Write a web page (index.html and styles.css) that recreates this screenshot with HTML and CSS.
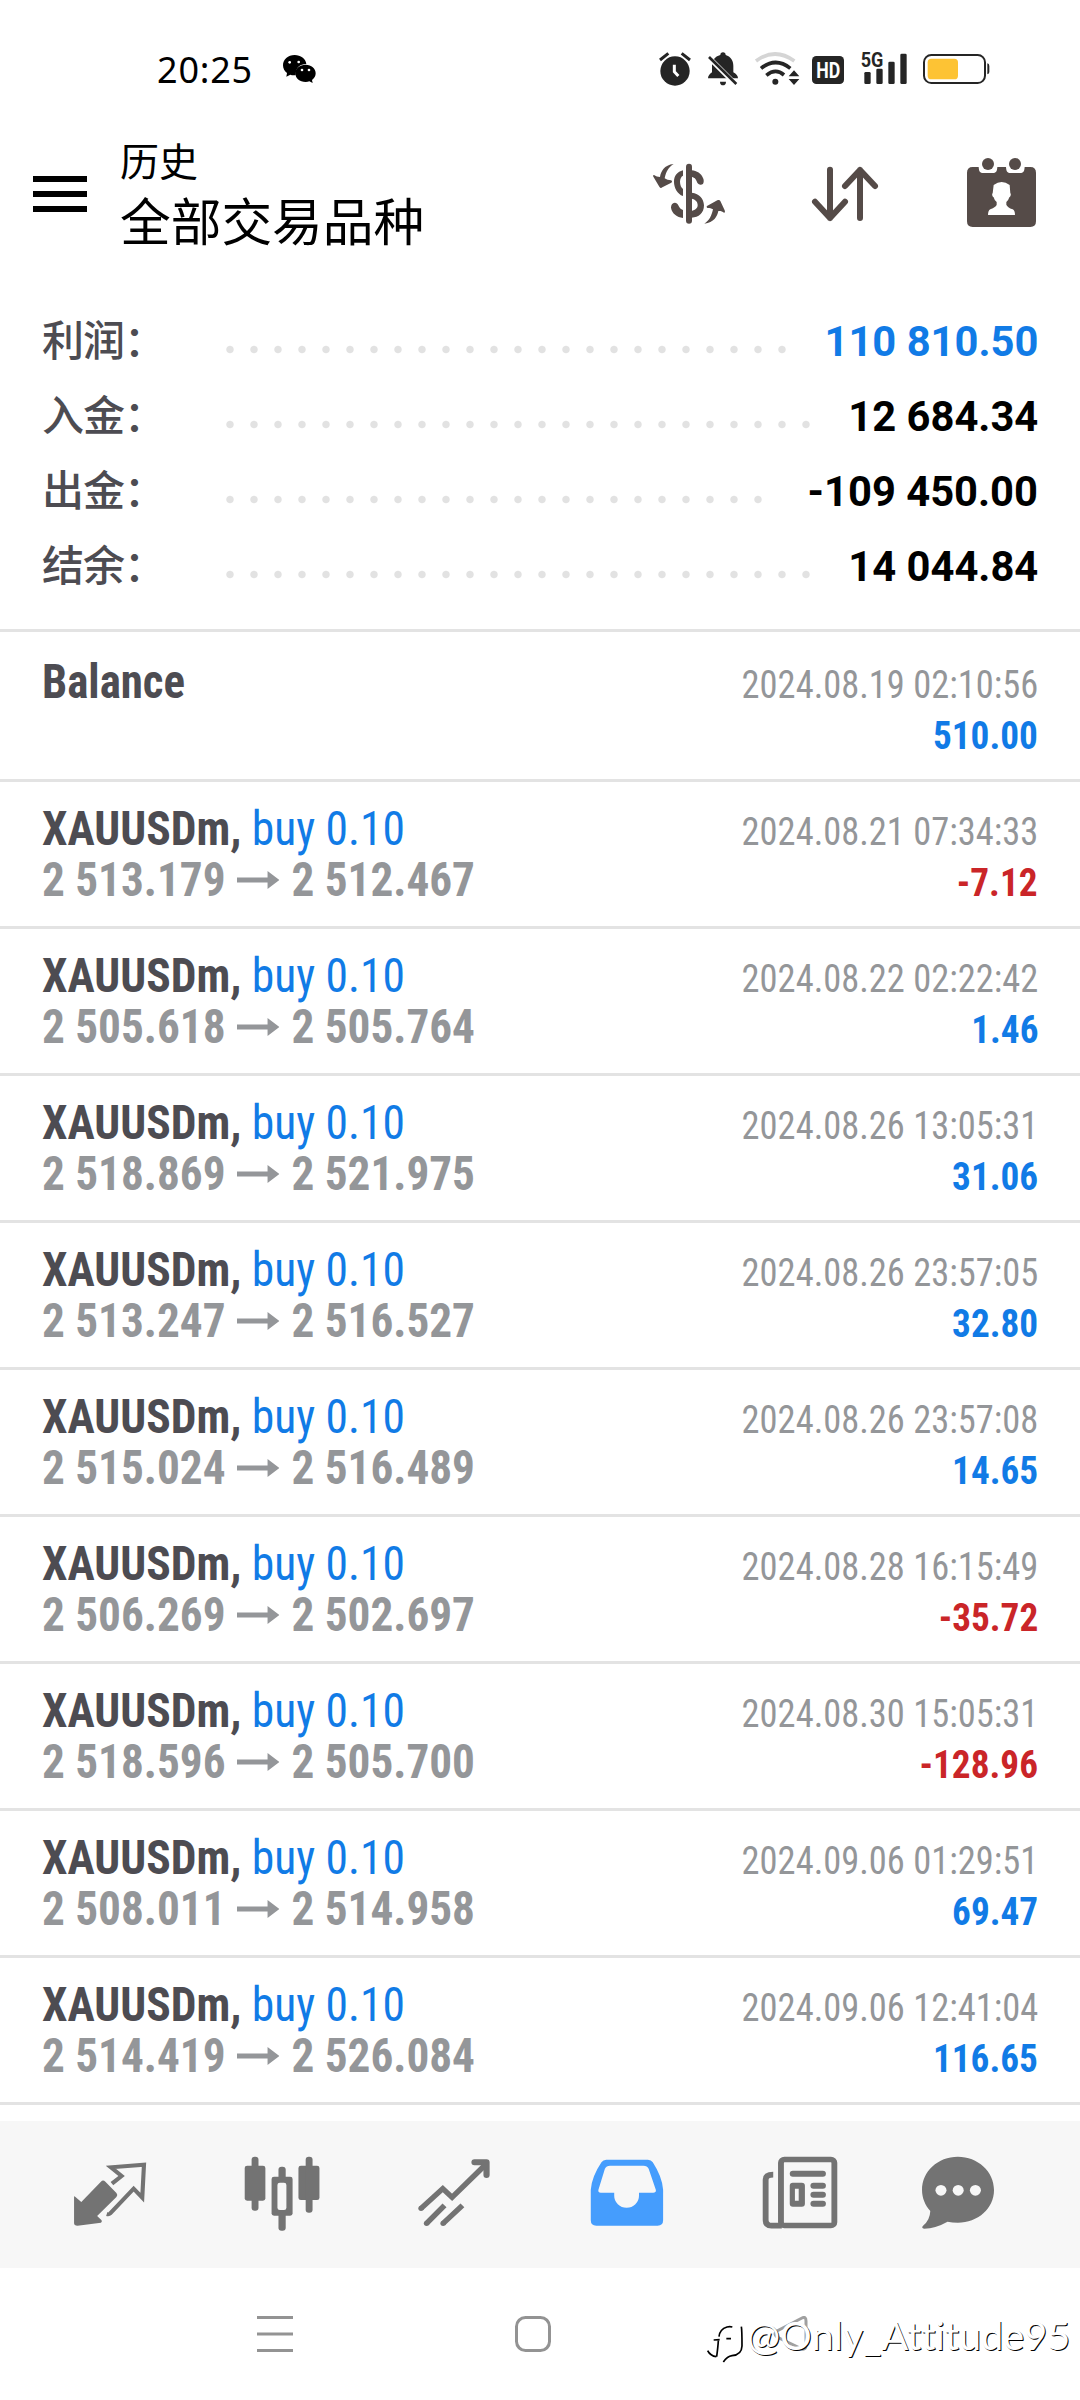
FILE: index.html
```
<!DOCTYPE html>
<html lang="zh-CN">
<head>
<meta charset="utf-8">
<title>历史</title>
<link rel="stylesheet" href="styles.css">
</head>
<body>
<div class="status">
  <span class="clock">20:25</span>
  <svg class="wechat" width="36" height="60" viewBox="426 0 108 180">
    <path d="M464 45c-20 0-35 13-35 31 0 10 5 18 12 23l-2 11 12-6c5 2 12 2 16 1 0-22 12-33 32-33-2-16-17-27-35-27z"/>
    <path d="M497 74c-18 0-31 11-31 26s13 26 31 26c4 0 8-1 11-2l10 5-2-9c7-5 11-12 11-20 0-15-13-26-30-26z"/>
    <g fill="#fff"><circle cx="449" cy="67" r="4"/><circle cx="476" cy="66" r="4"/><circle cx="486" cy="90" r="4"/><circle cx="507" cy="90" r="4"/></g>
  </svg>
  <div class="indicators">
    <svg width="34" height="60" viewBox="54 0 102 180"><circle cx="105" cy="93" r="44"/><path d="M60 60l25-20M150 60l-25-20" stroke="#252525" stroke-width="9"/><path d="M103 74v21l12 13" fill="none" stroke="#fff" stroke-width="9"/></svg>
    <svg class="g14" width="34" height="60" viewBox="198 0 102 180"><path d="M249 37c-5 0-8 3-8 8-17 4-25 17-25 32v20c-7 5-12 10-12 18h90c0-8-5-13-14-18V77c0-15-8-28-23-32 0-5-3-8-8-8zM240 125h18c0 8-4 11-9 11s-9-3-9-11z"/><path d="M202 48l88 88" stroke="#fff" stroke-width="15"/><path d="M207 51l82 81" stroke="#252525" stroke-width="8"/></svg>
    <svg class="g14" width="46" height="60" viewBox="342 0 138 180"><g fill="none" stroke="#252525" stroke-width="11"><path d="M348 63q57-42 115 0" stroke="#d5d5d5"/><path d="M363 85q44-35 88 0"/><path d="M379 106q28-23 53-1"/></g><circle cx="406" cy="125" r="9"/><path d="M446 109l16-18 16 18zM446 117l16 18 16-18z"/></svg>
    <svg class="g11" width="34" height="60" viewBox="513 0 102 180"><rect x="516" y="48" width="96" height="84" rx="13"/><text class="hd" x="565" y="113" text-anchor="middle" textLength="72" lengthAdjust="spacingAndGlyphs">HD</text></svg>
    <svg class="g15" width="48" height="60" viewBox="660 0 144 180"><text class="fiveg" x="662" y="80" textLength="68" lengthAdjust="spacingAndGlyphs">5G</text><rect x="673" y="96" width="19" height="36" rx="4"/><rect x="709" y="86" width="19" height="46" rx="4"/><rect x="745" y="65" width="19" height="67" rx="4"/><rect x="781" y="41" width="19" height="91" rx="4"/></svg>
    <svg class="g14" width="69" height="60" viewBox="846 0 207 180"><rect x="852" y="45" width="183" height="84" rx="22" fill="none" stroke="#252525" stroke-width="6"/><rect x="863" y="56" width="91" height="62" rx="11" fill="#fdc334"/><path d="M1042 70q6 1 6 8v18q0 6-6 7z"/></svg>
  </div>
</div>

<header class="header">
  <div class="burger"><i></i><i></i><i></i></div>
  <div class="titles"><div class="sub">历史</div><div class="main">全部交易品种</div></div>
  <div class="actions">
    <svg width="80" height="80" viewBox="90 75 240 240">
      <path d="M210 110v162" stroke-width="18" stroke-linecap="round"/>
      <path d="M192 121c-17 4-27 17-27 34 0 18 10 37 27 43v-21c-5-4-9-12-9-22 0-9 4-16 9-18z" class="solid"/>
      <path d="M218 121c15 2 29 8 35 25 3 9 0 18-7 18-8 1-11-4-13-10-2-8-8-12-15-14zM218 188c24 3 36 18 37 38 0 23-16 37-37 37v-20c11-3 18-8 18-18s-7-17-18-19zM192 240v24c-18-3-33-13-36-31 0-9 4-14 11-15 6 0 10 5 12 10 3 6 6 10 13 12z" class="solid"/>
      <path d="M164 102c-29 3-38 22-41 39-6 0-13-2-18-6-4 0-3 3-1 7l17 28c3 5 6 4 9 2l27-14c3-2 3-5-1-7-7 0-14-2-19-6 4-20 11-33 27-43zM256 281c29-3 39-22 42-38 6-1 12 1 17 5 4 0 3-3 2-7l-13-28c-2-4-5-4-9-2l-31 17c-2 2-1 5 2 6 6 0 11 1 16 4-4 18-10 33-26 43z" class="solid"/>
    </svg>
    <svg width="80" height="80" viewBox="558 75 240 240"><path d="M633 119v145M588 215l45 49 45-49M723 264V120M678 168l45-48 45 48" fill="none" stroke-width="18" stroke-linecap="round" stroke-linejoin="round"/></svg>
    <svg width="80" height="80" viewBox="1020 75 240 240"><path d="M1055 111h18c1 14 4 18 14 18h28c10 0 13-4 14-18h26c1 14 4 18 14 18h28c10 0 13-4 14-18h17q17 0 17 17v146q0 17-17 17h-173q-17 0-17-17V128q0-17 17-17z" class="solid"/><circle cx="1101" cy="102" r="18" class="solid"/><circle cx="1182" cy="102" r="18" class="solid"/><path d="M1118 165q24-18 48 0l2 25c3 1 1 11-3 12q-3 10-9 14v8q3 8 19 14 7 4 7 17h-81q0-13 7-17 17-7 19-14v-8q-7-5-9-14c-4-1-6-11-3-12z" fill="#fff"/></svg>
  </div>
</header>

<section class="summary">
  <div class="sum"><span class="label">利润：</span><span class="dots"></span><b class="blue">110 810.50</b></div>
  <div class="sum"><span class="label">入金：</span><span class="dots"></span><b>12 684.34</b></div>
  <div class="sum"><span class="label">出金：</span><span class="dots"></span><b>-109 450.00</b></div>
  <div class="sum"><span class="label">结余：</span><span class="dots"></span><b>14 044.84</b></div>
</section>

<main class="list" id="list"></main>

<nav class="tabs">
  <svg width="90" height="90" viewBox="188.7 205 261.3 270" preserveAspectRatio="none">
    <path d="M215 352q0-4 4 0l17 15 57-61q6-7 13 0l32 34q5 6 0 12l-56 57 13 13q2 5-2 7l-68 9q-10 0-10-8z"/>
    <path d="M325 312l28-23-31-26 96-8-5 99-25-27-68 74q-4 4-10 2" fill="none" stroke="#737373" stroke-width="12"/>
  </svg>
  <svg width="90" height="90" viewBox="686.6 205 261.3 270" preserveAspectRatio="none">
    <rect x="709" y="258" width="60" height="105" rx="7"/><rect x="729" y="231" width="20" height="162" rx="9"/>
    <rect x="865" y="258" width="61" height="103" rx="7"/><rect x="886" y="231" width="20" height="168" rx="9"/>
    <rect x="787" y="291" width="61" height="117" rx="7"/><rect x="807" y="261" width="21" height="192" rx="9"/><rect x="804" y="309" width="26" height="82" rx="7" fill="#f7f7f7"/>
  </svg>
  <svg width="90" height="90" viewBox="1185.9 205 261.3 270" preserveAspectRatio="none">
    <g fill="none" stroke="#737373" stroke-width="16"><path d="M1221 386l63-59 27 26 99-100" stroke-linejoin="miter"/><path d="M1376 248h35v38" stroke-width="18" stroke-linecap="round" stroke-linejoin="round"/><path d="M1237 431l52-54M1285 431l56-54"/></g>
    <circle cx="1221" cy="386" r="8"/><circle cx="1237" cy="431" r="8"/><circle cx="1285" cy="431" r="8"/>
  </svg>
  <svg width="90" height="90" viewBox="120.5 205 261.3 270" preserveAspectRatio="none" fill="#459dfd">
    <path fill-rule="evenodd" d="M191 240h121q9 0 14 8 27 43 30 82v92q0 16-16 16H162q-16 0-16-16v-92q3-39 31-82 5-8 14-8zM202 258q-11 0-15 9l-19 64q-1 8 7 8h39v9a36 36 0 0 0 72 0v-9h41q9 0 8-8l-21-64q-4-9-15-9z"/>
  </svg>
  <svg width="90" height="90" viewBox="624.1 205 261.3 270" preserveAspectRatio="none">
    <g fill="none" stroke="#737373" stroke-width="17"><rect x="699.500" y="239.500" width="155" height="198" rx="10"/><path d="M677 285q-22 0-22 15v121q0 17 17 17h30"/></g>
    <rect x="725" y="273" width="105" height="18" rx="9"/><path fill-rule="evenodd" d="M734 309h26q9 0 9 9v54q0 9-9 9h-26q-9 0-9-9v-54q0-9 9-9zM740 327v36h11v-36z"/><rect x="785" y="309" width="45" height="18" rx="9"/><rect x="785" y="336" width="45" height="18" rx="9"/><rect x="785" y="363" width="45" height="18" rx="9"/>
  </svg>
  <svg width="90" height="90" viewBox="1082.8 205 261.3 270" preserveAspectRatio="none">
    <path d="M1213 231c58 0 105 44 105 100s-47 98-105 98q-16 0-30-3-34 20-68 21-9-2-3-9 20-16 21-44c-15-17-24-39-24-63 0-56 46-100 104-100z"/><g fill="#f7f7f7"><circle cx="1164" cy="332" r="16"/><circle cx="1214" cy="332" r="16"/><circle cx="1264" cy="332" r="16"/></g>
  </svg>
</nav>

<div class="sysnav">
  <svg width="36" height="36" viewBox="0 0 36 36"><path d="M0 1.500h36M0 18h36M0 34.500h36" stroke="#939393" stroke-width="3"/></svg>
  <svg width="36" height="36" viewBox="0 0 36 36"><rect x="1.500" y="1.500" width="33" height="33" rx="9" fill="none" stroke="#939393" stroke-width="3"/></svg>
  <svg width="36" height="36" viewBox="0 0 36 36"><path d="M29 2L4 15q-4 3 0 6l25 12q4 1 4-4V5q0-5-4-3z" fill="none" stroke="#a0a0a0" stroke-width="3"/></svg>
  <div class="mark">
    <svg width="40" height="50" viewBox="50 0 120 150"><path d="M86 110q2-22 24-29 8-2 16 0M70 120l18-1M108 116h14M84 122q-1 18-5 48M52 152q8 16 26 18M153 80q2 10 2 58-1 27-30 29-14 2-26 19" transform="translate(0 -45)" fill="none" stroke="#000" stroke-width="5"/></svg>
    <span>@Only_Attitude95</span>
  </div>
</div>
<script src="list.js"></script>
</body>
</html>
```
FILE: list.js
```
const deals = [
  ["2 513.179", "2 512.467", "2024.08.21 07:34:33", "-7.12"],
  ["2 505.618", "2 505.764", "2024.08.22 02:22:42", "1.46"],
  ["2 518.869", "2 521.975", "2024.08.26 13:05:31", "31.06"],
  ["2 513.247", "2 516.527", "2024.08.26 23:57:05", "32.80"],
  ["2 515.024", "2 516.489", "2024.08.26 23:57:08", "14.65"],
  ["2 506.269", "2 502.697", "2024.08.28 16:15:49", "-35.72"],
  ["2 518.596", "2 505.700", "2024.08.30 15:05:31", "-128.96"],
  ["2 508.011", "2 514.958", "2024.09.06 01:29:51", "69.47"],
  ["2 514.419", "2 526.084", "2024.09.06 12:41:04", "116.65"]
];
const arrow = '<svg class="arrow" width="45" height="18" viewBox="0 0 43 18" preserveAspectRatio="none"><path d="M0 6.500h31V0l12 9-12 9v-6.500H0z"/></svg>';
const row = (cls, title, prices, time, value) =>
  `<div class="row ${cls}">
    <div class="line"><span class="title">${title}</span><span class="time">${time}</span></div>
    <div class="line"><span class="prices">${prices}</span><b class="value ${value[0] === "-" ? "red" : "blue"}">${value}</b></div>
  </div>`;
document.getElementById("list").innerHTML =
  row("balance", "<b>Balance</b>", "", "2024.08.19 02:10:56", "510.00") +
  deals.map(([from, to, time, value]) =>
    row("", '<b>XAUUSDm,</b> <span class="side">buy 0.10</span>', from + arrow + to, time, value)).join("");
```
FILE: styles.css
```
* { box-sizing: border-box; }
body { margin: 0; width: 1080px; height: 2400px; background: #fff; overflow: hidden; color: #000; font-family: Roboto, "Noto Sans CJK SC", sans-serif; display: flex; flex-direction: column; }
svg { display: block; flex: none; }

.status { height: 120px; padding: 40px 0 0 157px; display: flex; align-items: flex-start; }
.clock { width: 125px; font: 36px/60px "Noto Sans", sans-serif; letter-spacing: .8px; }
.indicators { display: flex; margin-left: 340px; fill: #252525; }
.g11 { margin-left: 11px; }
.g14 { margin-left: 14px; }
.g15 { margin-left: 15px; }
.hd { font: 700 66px Roboto, sans-serif; fill: #fff; }
.fiveg { font: 700 60px Roboto, sans-serif; }

.header { height: 180px; padding: 0 31px 0 33px; display: flex; align-items: flex-start; }
.burger { width: 54px; margin-top: 56px; display: flex; flex-direction: column; gap: 9px; }
.burger i { height: 6px; background: #000; }
.titles { margin: 13px 0 0 33px; font-family: "Noto Sans CJK SC", sans-serif; }
.sub { font-size: 39px; line-height: 52px; }
.main { font-size: 50.700px; line-height: 68px; }
.actions { display: flex; gap: 76px; margin: 35px 8px 0 auto; fill: none; stroke: #554b48; }
.solid { fill: #554b48; stroke: none; }
.actions [fill="#fff"] { stroke: none; }

.summary { height: 329px; padding: 0 42px; }
.sum { height: 75px; line-height: 75px; font-size: 42px; display: flex; align-items: baseline; }
.label { width: 176px; flex: none; color: #4d4c52; font: 500 42px/75px "Noto Sans CJK SC", sans-serif; letter-spacing: -1px; }
.dots { flex: 1; height: 75px; align-self: flex-start; margin-right: 34px; background: radial-gradient(circle at 12px 49.500px, #e2e2e2 3.200px, transparent 4.200px) 0 0 / 24px 75px repeat-x; }
.sum b { font-weight: 700; transform: scaleX(.993); transform-origin: right; }
.sum .blue { color: #117be6; }

.list { height: 1492px; font: 48px/51px "Roboto Condensed", Roboto, sans-serif; }
.row { height: 147px; border-top: 3px solid #e3e3e3; padding: 21px 42px 0; }
.row:last-child { height: 150px; border-bottom: 3px solid #e3e3e3; }
.balance { height: 150px; padding-top: 24px; }
.line { height: 51px; display: flex; align-items: baseline; color: #4d4c52; white-space: nowrap; }
.line::before { content: "\200b"; }
.title, .prices { margin-right: auto; transform: scaleX(.948); transform-origin: left; }
.balance .title { transform: scaleX(.935); }
.side { color: #117be6; }
.prices { color: #949699; font-weight: 700; transform: scaleX(.942); }
.arrow { display: inline-block; margin: 0 13px 7px 12px; fill: #949699; }
.time { color: #949699; font-size: 39px; transform: scaleX(.935); transform-origin: right; }
.value { font-size: 39px; transform: scaleX(.955); transform-origin: right; }
.line > .blue { color: #117be6; }
.line > .red { color: #ca2528; }

.tabs { height: 147px; flex: none; background: #f7f7f7; padding: 27px 0 0 65px; display: grid; grid-template-columns: 171.500px 172px 173px 173.500px 158px 90px; fill: #737373; }

.sysnav { position: relative; height: 132px; flex: none; padding: 48px 0 0 257px; display: flex; gap: 222px; }
.mark { position: absolute; left: 707px; top: 37px; display: flex; align-items: flex-start; }
.mark svg { margin-top: 10px; }
.mark span { margin-left: 0; font: 39.600px/60px Lato, sans-serif; color: #fff; font-variant-ligatures: none; text-shadow: 1px 1px 0 #000; }
```
